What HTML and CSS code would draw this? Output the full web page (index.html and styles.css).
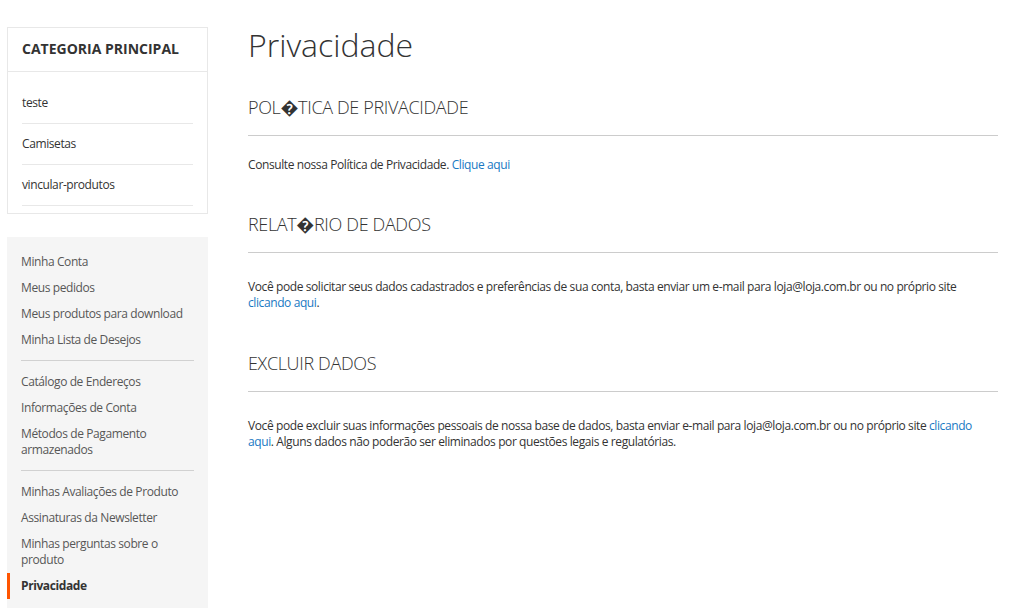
FILE: index.html
```html
<!DOCTYPE html>
<html lang="pt-BR">

<head>
    <meta charset="UTF-8">
    <meta name="viewport" content="width=device-width, initial-scale=1.0">
    <title>Privacidade</title>
    <link rel="stylesheet" href="styles.css">
</head>

<body>
    <div class="page">
        <!-- Sidebar -->
        <div class="sidebar">
            <div class="category-block">
                <div class="category-title">CATEGORIA PRINCIPAL</div>
                <ul class="category-list">
                    <li><a href="#">teste</a></li>
                    <li><a href="#">Camisetas</a></li>
                    <li><a href="#">vincular-produtos</a></li>
                </ul>
            </div>

            <div class="account-nav">
                <ul>
                    <li><a href="#">Minha Conta</a></li>
                    <li><a href="#">Meus pedidos</a></li>
                    <li><a href="#">Meus produtos para download</a></li>
                    <li><a href="#">Minha Lista de Desejos</a></li>
                    <li class="divider"></li>
                    <li><a href="#">Catálogo de Endereços</a></li>
                    <li><a href="#">Informações de Conta</a></li>
                    <li><a href="#">Métodos de Pagamento armazenados</a></li>
                    <li class="divider"></li>
                    <li><a href="#">Minhas Avaliações de Produto</a></li>
                    <li><a href="#">Assinaturas da Newsletter</a></li>
                    <li><a href="#">Minhas perguntas sobre o produto</a></li>
                    <li class="current"><strong>Privacidade</strong></li>
                </ul>
            </div>
        </div>

        <!-- Main -->
        <div class="main">
            <h1 class="page-title">Privacidade</h1>

            <div class="section first">
                <h2 class="section-title">POL�TICA DE PRIVACIDADE</h2>
                <p>Consulte nossa Política de Privacidade. <a href="#">Clique aqui</a></p>
            </div>

            <div class="section">
                <h2 class="section-title">RELAT�RIO DE DADOS</h2>
                <p>Você pode solicitar seus dados cadastrados e preferências de sua conta, basta enviar um e-mail para loja@loja.com.br ou no próprio site <a href="#">clicando aqui</a>.</p>
            </div>

            <div class="section">
                <h2 class="section-title">EXCLUIR DADOS</h2>
                <p>Você pode excluir suas informações pessoais de nossa base de dados, basta enviar e-mail para loja@loja.com.br ou no próprio site <a href="#">clicando aqui</a>. Alguns dados não poderão ser eliminados por questões legais e regulatórias.</p>
            </div>
        </div>
    </div>
</body>

</html>
```

FILE: styles.css
```css
body {
    font-family: "Open Sans", "Liberation Sans", sans-serif;
    margin: 0;
    padding: 0;
    background-color: #ffffff;
    color: #333333;
    font-size: 12px;
    letter-spacing: -0.4px;
}

a {
    color: #1979c3;
    text-decoration: none;
}

ul {
    list-style: none;
    margin: 0;
    padding: 0;
}

.page {
    display: flex;
    align-items: flex-start;
    padding: 27px 26px 0 7px;
}
/* Sidebar */

.sidebar {
    width: 201px;
    flex-shrink: 0;
}

.category-block {
    border: 1px solid #e8e8e8;
    margin-bottom: 23px;
}

.category-title {
    font-size: 14px;
    font-weight: 700;
    letter-spacing: 0;
    padding: 11px 14px 12px;
    border-bottom: 1px solid #e8e8e8;
    line-height: 20px;
}

.category-list {
    padding: 11px 14px 7px;
}

.category-list li {
    border-bottom: 1px solid #e8e8e8;
}

.category-list a {
    display: block;
    color: #333333;
    line-height: 16px;
    padding: 12px 0;
}

.account-nav {
    background-color: #f5f5f5;
    padding: 12px 0 2px;
    min-height: 360px;
}

.account-nav li a,
.account-nav li strong {
    display: block;
    color: #575757;
    line-height: 16px;
    padding: 5px 14px 5px 11px;
    border-left: 3px solid transparent;
}

.account-nav li.divider {
    border-top: 1px solid #d1d1d1;
    margin: 7px 14px 8px;
}

.account-nav li.current strong {
    color: #333333;
    font-weight: 700;
    border-left-color: #ff5501;
}
/* Main */

.main {
    flex: 1;
    padding-left: 40px;
}

.page-title {
    font-size: 32px;
    font-weight: 300;
    letter-spacing: 0;
    margin: 0 0 33px;
    line-height: 36px;
}

.section-title {
    font-size: 18px;
    font-weight: 300;
    letter-spacing: -0.35px;
    margin: 0;
    padding-bottom: 17px;
    border-bottom: 1px solid #cccccc;
    line-height: 22px;
}

.section p {
    margin: 26px 0 41px;
    line-height: 16px;
}

.section.first p {
    margin: 21px 0 40px;
}
```
